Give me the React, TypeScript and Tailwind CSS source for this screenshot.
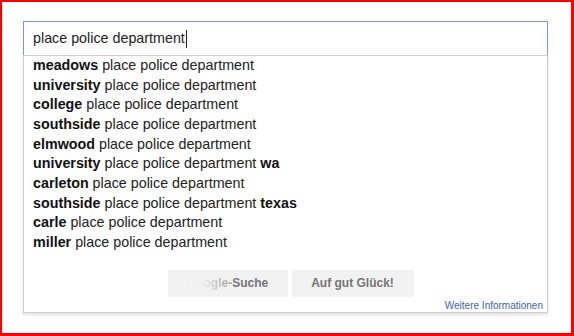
import React from "react";

type Suggestion = {
  pre?: string;
  post?: string;
};

const suggestions: Suggestion[] = [
  { pre: "meadows" },
  { pre: "university" },
  { pre: "college" },
  { pre: "southside" },
  { pre: "elmwood" },
  { pre: "university", post: "wa" },
  { pre: "carleton" },
  { pre: "southside", post: "texas" },
  { pre: "carle" },
  { pre: "miller" },
];

const query = "place police department";

function SuggestionRow({ pre, post }: Suggestion) {
  return (
    <div className="h-[19.67px] leading-[19.67px] pl-[9px] text-[14.3px] text-[#222] whitespace-nowrap">
      {pre && <b className="font-bold text-[#111]">{pre} </b>}
      <span>{query}</span>
      {post && <b className="font-bold text-[#111]"> {post}</b>}
    </div>
  );
}

export default function App() {
  return (
    <div
      className="w-[574px] h-[336px] bg-white border-[#ff0000] border-l-2 border-t-2 border-r-[3px] border-b-[3px] pt-[19px] pl-[21px]"
      style={{ fontFamily: '"Liberation Sans", Arial, sans-serif' }}
    >
      <div className="w-[525px]">
        {/* search input */}
        <div className="h-[34px] border border-b-0 border-[#6f9dd0] bg-white flex items-center pl-[9px]">
          <span className="text-[14.3px] text-[#222]">{query}</span>
          <span className="w-px h-[18px] bg-[#222] ml-px" />
        </div>

        {/* dropdown */}
        <div className="border border-[#cfcfcf] shadow-[0_2px_3px_rgba(0,0,0,0.12)] bg-white">
          <div>
            {suggestions.map((s, i) => (
              <SuggestionRow key={i} {...s} />
            ))}
          </div>

          <div className="flex justify-center gap-[4px] mt-[17px] pl-[10px]">
            <button className="w-[120px] h-[27px] bg-[#f2f2f2] text-[12px] font-bold text-[#757575] rounded-[2px]">
              <span className="bg-gradient-to-r from-[#f0f0f0] from-35% to-[#9a9a9a] bg-clip-text text-transparent">
                Google-
              </span>
              Suche
            </button>
            <button className="w-[122px] h-[27px] bg-[#f2f2f2] text-[12px] font-bold text-[#757575] rounded-[2px]">
              Auf gut Glück!
            </button>
          </div>

          <div className="flex justify-end pr-[4px] mt-[2px] h-[13px] leading-[13px]">
            <a className="text-[10px] text-[#3c63b5]">Weitere Informationen</a>
          </div>
        </div>
      </div>
    </div>
  );
}
